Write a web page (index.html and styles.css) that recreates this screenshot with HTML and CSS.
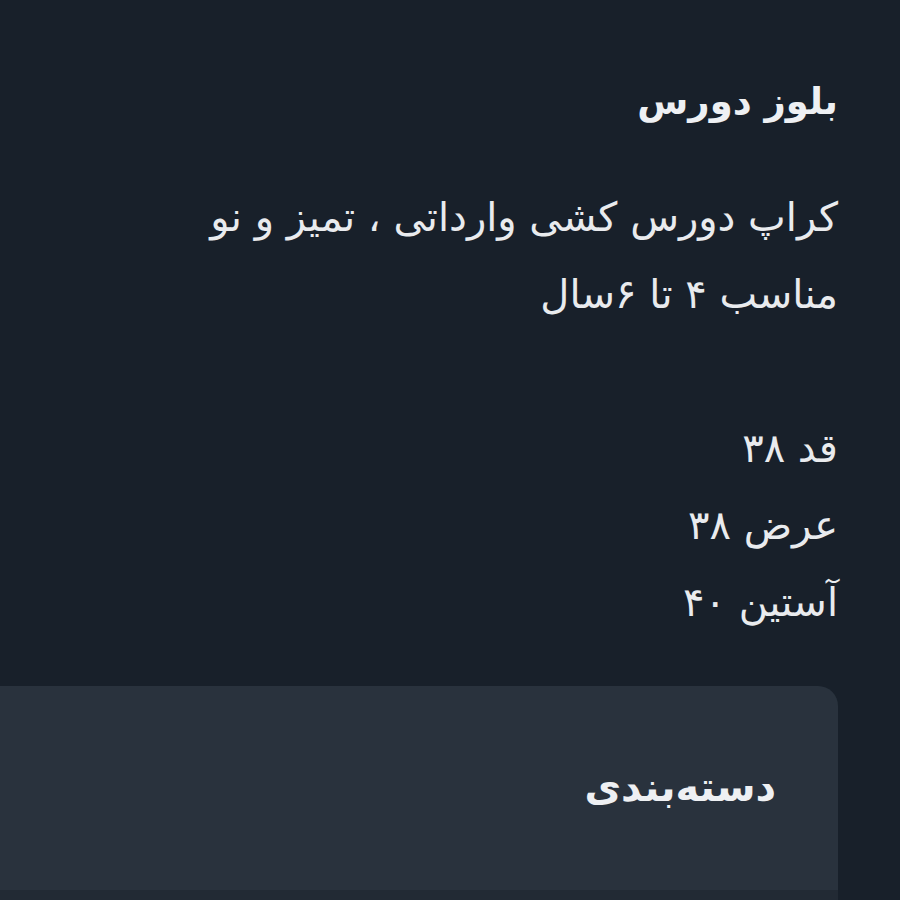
FILE: index.html
```html
<!DOCTYPE html>
<html lang="fa" dir="rtl">
<head>
    <meta charset="UTF-8">
    <meta name="viewport" content="width=device-width, initial-scale=1.0">
    <title>بلوز دورس</title>
    <link rel="stylesheet" href="styles.css">
</head>
<body>
    <div class="product">
        <h1 class="product-title">بلوز دورس</h1>

        <!-- Product description -->
        <div class="product-desc">
            <p>کراپ دورس کشی وارداتی ، تمیز و نو<br>مناسب ۴ تا ۶سال</p>
            <p>قد ۳۸<br>عرض ۳۸<br>آستین ۴۰</p>
        </div>
    </div>

    <!-- Category card -->
    <div class="card">
        <h2 class="card-title">دسته‌بندی</h2>
    </div>
    <div class="card-foot"></div>
</body>
</html>
```

FILE: styles.css
```css
html, body {
    overflow: hidden;
}

body {
    font-family: "DejaVu Sans", "Noto Sans", sans-serif;
    background-color: #18202a;
    color: #eef0f3;
    margin: 0;
    height: 900px;
}

.product {
    padding: 72px 62px 0 0;
}

.product-title {
    font-size: 37px;
    font-weight: bold;
    margin: 0;
    line-height: 60px;
}

.product-desc {
    margin-top: 47px;
    font-size: 40px;
    line-height: 77px;
    color: #e9ebee;
}

.product-desc p {
    margin: 0 0 77px 0;
}

.product-desc p:last-child {
    margin-bottom: 0;
}

.card {
    margin: 45px 62px 0 -30px;
    background-color: #29323d;
    border-radius: 20px 20px 0 0;
    height: 204px;
    padding-right: 62px;
    box-sizing: border-box;
}

.card-title {
    margin: 0;
    padding-top: 81px;
    font-size: 40px;
    font-weight: bold;
    line-height: 40px;
}

.card-foot {
    margin: 0 62px 0 0;
    height: 20px;
    background-color: #222a34;
}
```
